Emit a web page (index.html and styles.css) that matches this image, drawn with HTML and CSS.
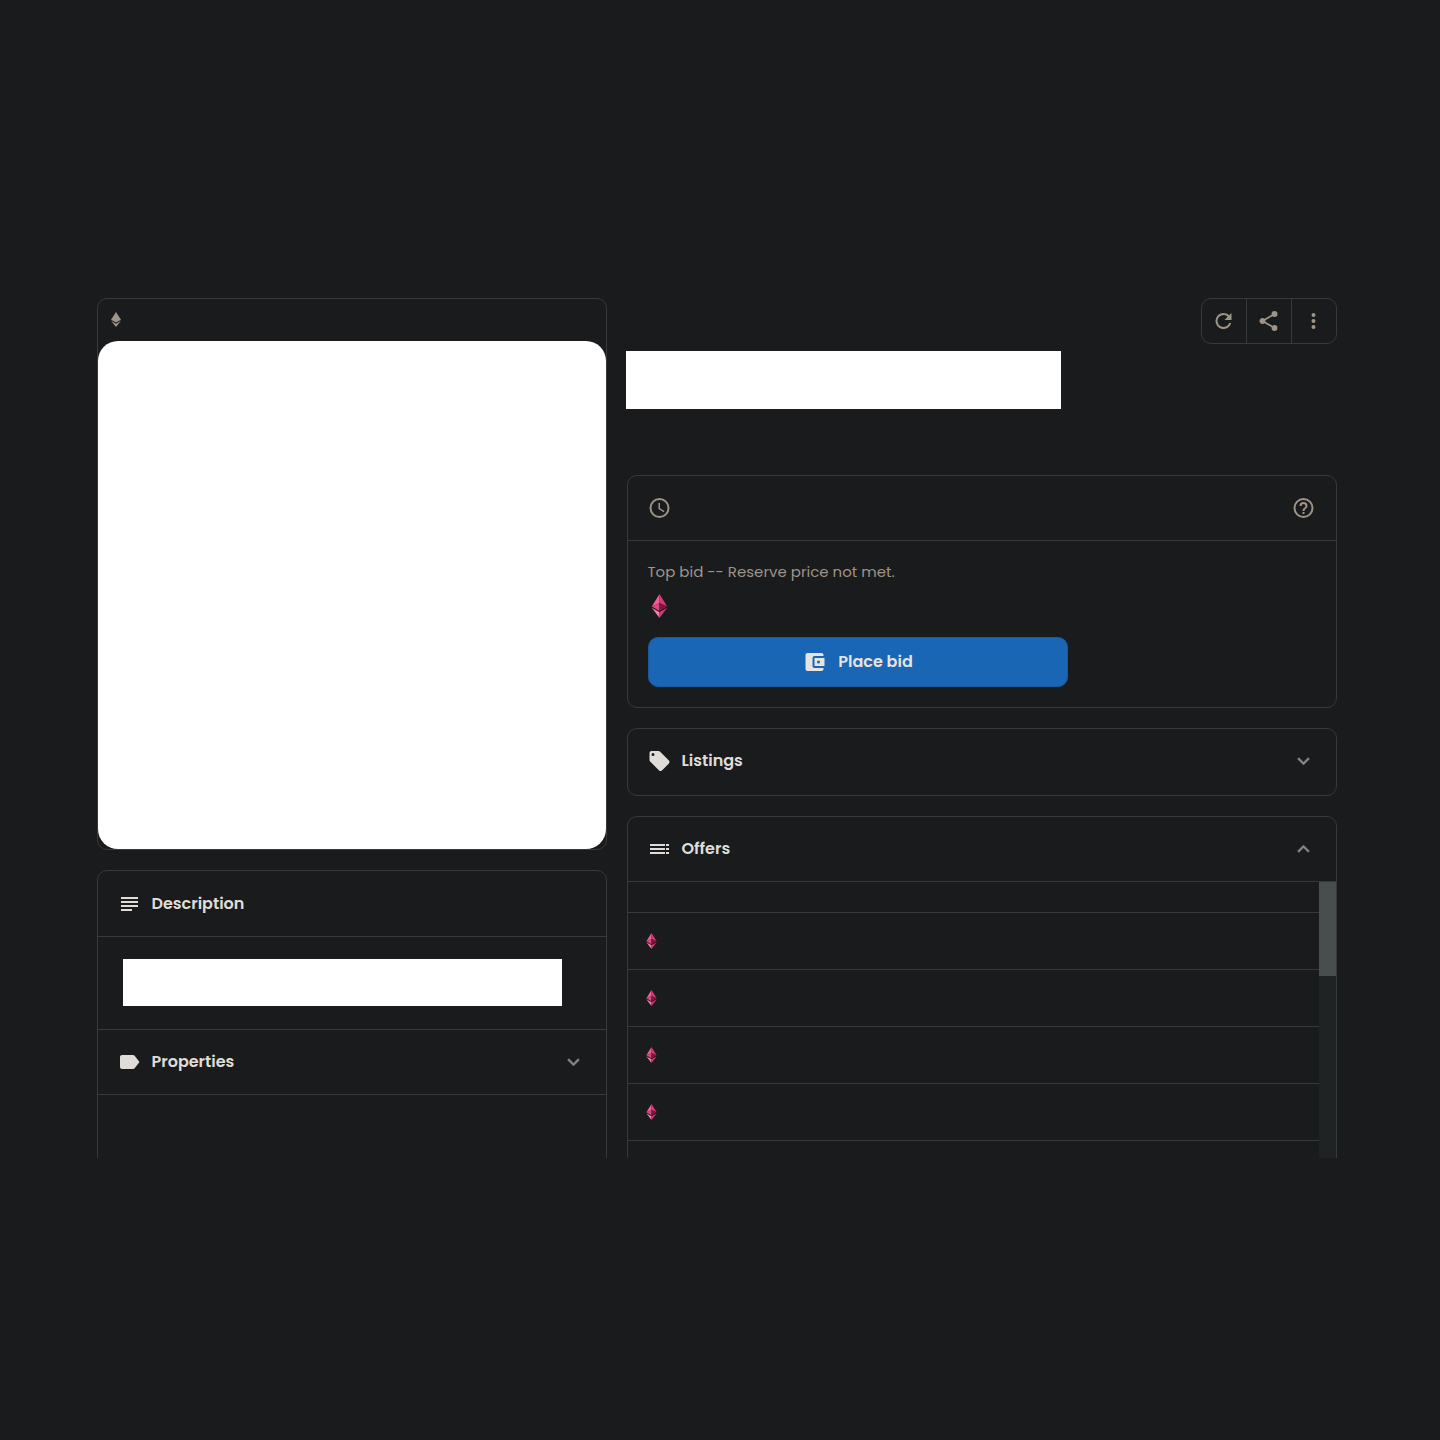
FILE: index.html
```html
<!DOCTYPE html>
<html lang="en">
<head>
<meta charset="utf-8">
<title>Item</title>
<link rel="stylesheet" href="styles.css">
</head>
<body>
<svg class="defs" aria-hidden="true">
  <symbol id="eth" viewBox="0 0 16 24">
    <path fill="#ee6297" d="M8 0v9L.3 12.5z"/>
    <path fill="#d93878" d="M8 0l7.7 12.5L8 9z"/>
    <path fill="#e7407f" d="M8 9v8L.3 12.5z"/>
    <path fill="#7c1740" d="M8 9l7.7 3.5L8 17z"/>
    <path fill="#f384ad" d="M.3 13.7L8 18.2V24z"/>
    <path fill="#d93878" d="M15.7 13.7L8 18.2V24z"/>
  </symbol>
  <symbol id="chevron" viewBox="0 0 24 24"><path stroke="currentColor" stroke-width=".4" d="M7.41 8.59 12 13.17l4.59-4.58L18 10l-6 6-6-6z"/></symbol>
</svg>
<main class="page">
  <section class="left">
    <article class="card media">
      <header class="media-head">
        <svg class="eth-grey" viewBox="0 0 10 15"><path d="M5 0l5 7.7-5 2.9-5-2.9zM0 8.8l5 2.9 5-2.9L5 15z"/></svg>
      </header>
      <div class="picture"></div>
    </article>
    <article class="card details">
      <header class="head">
        <svg class="icon" viewBox="0 0 24 24"><path d="M3.5 5h17v2h-17zM3.5 9h17v2h-17zM3.5 13h17v2h-17zM3.5 17h11v2h-11z"/></svg>
        <h2 class="title">Description</h2>
      </header>
      <div class="about"><div class="about-block"></div></div>
      <header class="head">
        <svg class="icon" viewBox="0 0 24 24"><path d="M17.13 5.84C16.77 5.33 16.17 5 15.5 5L4.5 5.01C3.4 5.01 2.5 5.9 2.5 7v10c0 1.1.9 1.99 2 1.99L15.5 19c.67 0 1.27-.33 1.63-.84L22 12z"/></svg>
        <h2 class="title">Properties</h2>
        <svg class="icon toggle"><use href="#chevron"/></svg>
      </header>
    </article>
  </section>
  <section class="right">
    <div class="top">
      <div class="heading"></div>
      <nav class="tools">
        <button class="tool"><svg class="icon" viewBox="0 0 24 24"><path d="M17.65 6.35A7.96 7.96 0 0 0 12 4a8 8 0 1 0 7.73 10h-2.08A6 6 0 1 1 12 6c1.66 0 3.14.69 4.22 1.78L13 11h7V4z"/></svg></button>
        <button class="tool"><svg class="icon" viewBox="0 0 24 24"><path d="M18 16.08c-.76 0-1.44.3-1.96.77L8.91 12.7c.05-.23.09-.46.09-.7s-.04-.47-.09-.7l7.05-4.11c.54.5 1.25.81 2.04.81a3 3 0 1 0-3-3c0 .24.04.47.09.7L8.04 9.81A3 3 0 1 0 6 15c.79 0 1.5-.31 2.04-.81l7.12 4.16c-.05.21-.08.43-.08.65a2.92 2.92 0 1 0 2.92-2.92z"/></svg></button>
        <button class="tool"><svg class="icon" viewBox="0 0 24 24"><path d="M12 8a2 2 0 1 0 0-4 2 2 0 0 0 0 4zm0 2a2 2 0 1 0 0 4 2 2 0 0 0 0-4zm0 6a2 2 0 1 0 0 4 2 2 0 0 0 0-4z"/></svg></button>
      </nav>
    </div>
    <article class="card bid">
      <header class="head muted">
        <svg class="icon" viewBox="0 0 24 24"><path d="M12 2a10 10 0 1 0 0 20 10 10 0 0 0 0-20zm0 18a8 8 0 1 1 0-16 8 8 0 0 1 0 16zM12.5 7H11v6l5.25 3.15.75-1.23-4.5-2.67z"/></svg>
        <svg class="icon toggle" viewBox="0 0 24 24"><path d="M11 18h2v-2h-2v2zm1-16a10 10 0 1 0 0 20 10 10 0 0 0 0-20zm0 18a8 8 0 1 1 0-16 8 8 0 0 1 0 16zm0-14a4 4 0 0 0-4 4h2a2 2 0 1 1 4 0c0 2-3 1.75-3 5h2c0-2.25 3-2.5 3-5a4 4 0 0 0-4-4z"/></svg>
      </header>
      <div class="bid-body">
        <p class="label">Top bid -- Reserve price not met.</p>
        <svg class="eth-large"><use href="#eth"/></svg>
        <button class="place">
          <svg class="icon" viewBox="0 0 24 24"><path d="M21 18v1c0 1.1-.9 2-2 2H5a2 2 0 0 1-2-2V5c0-1.1.89-2 2-2h14c1.1 0 2 .9 2 2v1h-9a2 2 0 0 0-2 2v8c0 1.1.89 2 2 2h9zm-9-2h10V8H12v8zm4-2.5a1.5 1.5 0 1 1 0-3 1.5 1.5 0 0 1 0 3z"/></svg>
          <span class="place-text">Place bid</span>
        </button>
      </div>
    </article>
    <article class="card listings">
      <header class="head">
        <svg class="icon" viewBox="0 0 24 24"><path d="M21.41 11.58l-9-9C12.05 2.22 11.55 2 11 2H4a2 2 0 0 0-2 2v7c0 .55.22 1.05.59 1.42l9 9c.36.36.86.58 1.41.58s1.05-.22 1.41-.59l7-7c.37-.36.59-.86.59-1.41s-.23-1.06-.59-1.42zM5.5 7a1.5 1.5 0 1 1 0-3 1.5 1.5 0 0 1 0 3z"/></svg>
        <h2 class="title">Listings</h2>
        <svg class="icon toggle"><use href="#chevron"/></svg>
      </header>
    </article>
    <article class="card offers">
      <header class="head">
        <svg class="icon" viewBox="0 0 24 24"><path d="M2.5 9h15V7h-15v2zm0 4h15v-2h-15v2zm0 4h15v-2h-15v2zm16 0h3v-2h-3v2zm0-10v2h3V7h-3zm0 6h3v-2h-3v2z"/></svg>
        <h2 class="title">Offers</h2>
        <svg class="icon toggle up"><use href="#chevron"/></svg>
      </header>
      <div class="scroller">
        <div class="rows">
          <div class="row row-head"></div>
          <div class="row"><svg class="eth-small"><use href="#eth"/></svg></div>
          <div class="row"><svg class="eth-small"><use href="#eth"/></svg></div>
          <div class="row"><svg class="eth-small"><use href="#eth"/></svg></div>
          <div class="row"><svg class="eth-small"><use href="#eth"/></svg></div>
        </div>
        <div class="track"><div class="thumb"></div></div>
      </div>
    </article>
  </section>
</main>
</body>
</html>
```
FILE: styles.css
```css
* { box-sizing: border-box; }
body {
  margin: 0;
  min-height: 1440px;
  padding: 298px 103px 0 97px;
  background: #1a1b1d;
  color: #e0ddd8;
  font-family: Poppins, Inter, sans-serif;
}
.defs { position: absolute; width: 0; height: 0; }
h2, p { margin: 0; }
button { margin: 0; font: inherit; color: inherit; background: none; border: 0; padding: 0; }
svg { display: block; flex: none; }
.page { display: flex; gap: 20px; height: 860px; overflow: hidden; }
.left { width: 510px; display: flex; flex-direction: column; gap: 20px; }
.right { width: 710px; display: flex; flex-direction: column; gap: 20px; }
.card { border: 1px solid #37393b; border-radius: 10px; flex: none; }

.icon { width: 25px; height: 24px; fill: currentColor; }
.head { display: flex; align-items: center; height: 65px; padding: 0 20px 0 19px; border-bottom: 1px solid #37393b; }
.title { margin-left: 9.5px; font-size: 16px; line-height: 24px; font-weight: 600; white-space: nowrap; }
.toggle { margin-left: auto; color: #888784; }
.up { transform: rotate(180deg); }
.muted, .muted .toggle { color: #9e9488; }

.media { height: 552px; }
.media-head { height: 42px; padding: 13px; }
.eth-grey { width: 10px; height: 15px; fill: #9e9488; }
.picture { height: 508px; border-radius: 20px; background: #fff; }
.details { height: 400px; }
.details .head:first-child { height: 66px; }
.details .head:first-child .icon { margin-top: 1px; }
.about { height: 93px; padding: 22px 25px; border-bottom: 1px solid #37393b; }
.about-block { width: 439px; height: 47px; background: #fff; }

.top { display: flex; flex: none; justify-content: space-between; height: 157px; }
.heading { width: 435px; height: 58px; margin: 53px 0 0 -1px; background: #fff; }
.tools { display: flex; width: 136px; height: 46px; border: 1px solid #37393b; border-radius: 10px; color: #9e9488; }
.tool { display: flex; align-items: center; justify-content: center; width: 45px; padding-right: 1px; border-right: 1px solid #37393b; }
.tool:last-child { width: 44px; border-right: 0; }

.bid { height: 233px; }
.bid-body { padding: 19px 20px; }
.label { height: 24px; margin-left: -.5px; font-size: 15px; line-height: 24px; color: #9e9488; white-space: nowrap; }
.eth-large { width: 17px; height: 24px; margin: 10px 0 19px 3px; }
.place { display: flex; align-items: center; justify-content: center; gap: 11px; width: 420px; height: 50px; padding-right: 1px; border: 1px solid #1b599d; border-radius: 10px; background: #1966b4; color: #e6e4e0; }
.place-text { font-size: 16px; font-weight: 600; line-height: 24px; }
.listings { height: 68px; }
.listings .head { height: 64px; border: 0; }
.offers { height: 500px; }
.scroller { display: flex; height: 434px; }
.rows { flex: 1; }
.row { display: flex; align-items: center; height: 57px; padding-left: 18px; border-bottom: 1px solid #37393b; }
.row-head { height: 31px; }
.eth-small { width: 11px; height: 16px; }
.track { width: 17px; background: #202324; }
.thumb { height: 94px; background: #484d4e; }
```
